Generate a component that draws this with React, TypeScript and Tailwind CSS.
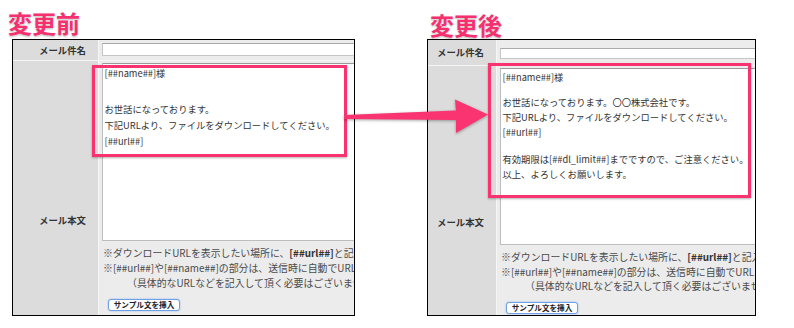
import type { ReactNode } from "react";

type Line = { text: ReactNode; gap: string };

const beforeLines: Line[] = [
  { text: "[##name##]様", gap: "mt-[1px]" },
  { text: "お世話になっております。", gap: "mt-[20px]" },
  { text: "下記URLより、ファイルをダウンロードしてください。", gap: "mt-0" },
  { text: "[##url##]", gap: "mt-0" },
];

const afterLines: Line[] = [
  { text: "[##name##]様", gap: "mt-[1px]" },
  { text: "お世話になっております。〇〇株式会社です。", gap: "mt-[10px]" },
  { text: "下記URLより、ファイルをダウンロードしてください。", gap: "mt-0" },
  { text: "[##url##]", gap: "mt-0" },
  { text: "有効期限は[##dl_limit##]までですので、ご注意ください。", gap: "mt-[12px]" },
  { text: "以上、よろしくお願いします。", gap: "mt-0" },
];

type PanelProps = {
  panelW: string;
  labelW: string;
  subjectRow: string;
  inputBox: string;
  bodyLabelPt: string;
  areaBox: string;
  textLeading: string;
  noteLeading: string;
  lines: Line[];
};

function Notes({ leading }: { leading: string }) {
  return (
    <div className={`mt-[5px] ml-px text-[9.9px] text-[#4a4a4a] whitespace-nowrap ${leading}`}>
      <div>
        ※ダウンロードURLを表示したい場所に、<b className="text-[#333]">[##url##]</b>と記入してください。
      </div>
      <div>※[##url##]や[##name##]の部分は、送信時に自動でURLと名前に置き換わります。</div>
      <div className="pl-[24px]">（具体的なURLなどを記入して頂く必要はございません）</div>
    </div>
  );
}

function Panel(p: PanelProps) {
  return (
    <div className={`${p.panelW} h-[277px] shrink-0 border border-black bg-[#ececec] overflow-hidden flex flex-col`}>
      <div className={`flex shrink-0 ${p.subjectRow}`}>
        <div className={`${p.labelW} shrink-0 bg-[#dcdcdc] flex items-center justify-end pr-[12px] text-[9.4px] font-bold text-[#333] whitespace-nowrap`}>
          メール件名
        </div>
        <div className="flex-1 min-w-0 border-l border-[#f6f6f6] pl-[3px]">
          <div className={`${p.inputBox} w-[300px] bg-white border border-[#c6c6c6] border-t-[#a9a9a9]`} />
        </div>
      </div>
      <div className="h-px shrink-0 bg-[#f6f6f6]" />
      <div className="flex flex-1 min-h-0">
        <div className={`${p.labelW} shrink-0 bg-[#dcdcdc] ${p.bodyLabelPt} pr-[12px] text-right text-[9.4px] leading-[16px] font-bold text-[#333] whitespace-nowrap`}>
          メール本文
        </div>
        <div className="flex-1 min-w-0 border-l border-[#f6f6f6] pl-[3px] pt-[2px]">
          <div className={`${p.areaBox} w-[280px] bg-white border border-[#bdbdbd] border-t-[#9a9a9a] pl-[1.5px] text-[9.3px] text-[#333] whitespace-nowrap ${p.textLeading}`}>
            {p.lines.map((l, i) => (
              <div key={i} className={l.gap}>
                {l.text}
              </div>
            ))}
          </div>
          <Notes leading={p.noteLeading} />
          <button className="mt-[8px] ml-[6px] h-[12px] w-[72px] rounded-[3px] bg-white border border-[#6f9fe6] shadow-[0_0_2px_#8fb6f0] text-[7.6px] leading-[10px] font-bold text-[#222] flex items-center justify-center whitespace-nowrap">
            サンプル文を挿入
          </button>
        </div>
      </div>
    </div>
  );
}

export default function App() {
  return (
    <div className="relative w-[794px] h-[328px] bg-white overflow-hidden flex font-['Noto_Sans_CJK_JP',sans-serif]">
      <div className="ml-[12px] shrink-0 flex flex-col">
        <h2 className="-ml-[4px] mt-[11px] mb-[4px] h-[24px] text-[24px] leading-[24px] font-bold text-[#f4306f] [text-shadow:0_0_2px_#fff,0_1px_2px_rgba(0,0,0,0.35)]">
          変更前
        </h2>
        <Panel
          panelW="w-[343px]"
          labelW="w-[85px]"
          subjectRow="h-[20px]"
          inputBox="mt-[3px] h-[13px]"
          bodyLabelPt="pt-[151px]"
          areaBox="h-[178px]"
          textLeading="leading-[16px]"
          noteLeading="leading-[15px]"
          lines={beforeLines}
        />
      </div>
      <div className="ml-[72px] shrink-0 flex flex-col">
        <h2 className="ml-[3px] mt-[13px] mb-[2px] h-[24px] text-[24px] leading-[24px] font-bold text-[#f4306f] [text-shadow:0_0_2px_#fff,0_1px_2px_rgba(0,0,0,0.35)]">
          変更後
        </h2>
        <Panel
          panelW="w-[329px]"
          labelW="w-[68px]"
          subjectRow="h-[25px]"
          inputBox="mt-[8px] h-[11px]"
          bodyLabelPt="pt-[148px]"
          areaBox="h-[177px]"
          textLeading="leading-[15px]"
          noteLeading="leading-[14.5px]"
          lines={afterLines}
        />
      </div>

      {/* highlight boxes + arrow lie over the panels */}
      <div className="absolute left-[92px] top-[65px] w-[255px] h-[92px] border-[3px] border-[#f8336f] shadow-[0_1px_2px_rgba(0,0,0,0.3)] pointer-events-none" />
      <div className="absolute left-[488px] top-[63px] w-[263px] h-[135px] border-[3px] border-[#f8336f] shadow-[0_1px_2px_rgba(0,0,0,0.3)] pointer-events-none" />
      <svg className="absolute left-0 top-0 pointer-events-none" width="794" height="328" viewBox="0 0 794 328">
        <polygon
          points="344,115 456,110.5 455,99.5 488,114.5 456,133 456,120 344,119"
          fill="#fa3371"
          style={{ filter: "drop-shadow(0 1px 1.5px rgba(0,0,0,0.35))" }}
        />
      </svg>
    </div>
  );
}
